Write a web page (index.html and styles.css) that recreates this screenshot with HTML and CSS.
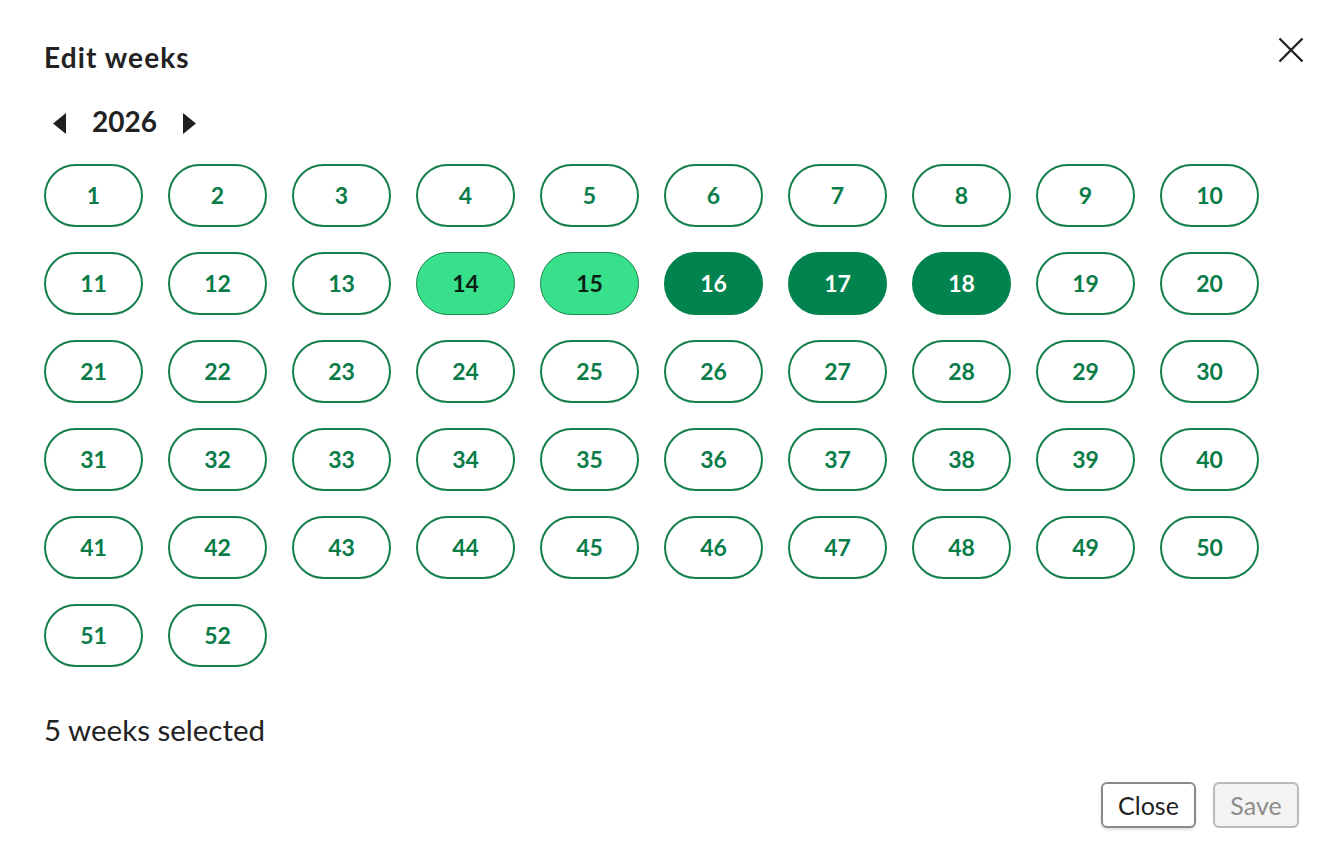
FILE: index.html
```html
<!DOCTYPE html>
<html lang="en">
<head>
<meta charset="utf-8">
<title>Edit weeks</title>
<link rel="stylesheet" href="styles.css">
</head>
<body>
<div class="dialog">
  <header class="header">
    <h1 class="title">Edit weeks</h1>
    <button class="close-x" aria-label="Close">
      <svg width="26" height="26" viewBox="0 0 26 26"><path d="M1.5 1.5 L24.5 24.5 M24.5 1.5 L1.5 24.5" stroke="#1f1f1f" stroke-width="2.3" stroke-linecap="butt" fill="none"/></svg>
    </button>
  </header>
  <div class="year-row">
    <button class="arrow" aria-label="Previous year"><svg width="13" height="21" viewBox="0 0 13 21"><path d="M13 0 L0 10.5 L13 21 Z" fill="#1f1f1f"/></svg></button>
    <span class="year">2026</span>
    <button class="arrow" aria-label="Next year"><svg width="13" height="21" viewBox="0 0 13 21"><path d="M0 0 L13 10.5 L0 21 Z" fill="#1f1f1f"/></svg></button>
  </div>
  <div class="weeks">
    <button class="week">1</button><button class="week">2</button><button class="week">3</button><button class="week">4</button><button class="week">5</button><button class="week">6</button><button class="week">7</button><button class="week">8</button><button class="week">9</button><button class="week">10</button>
    <button class="week">11</button><button class="week">12</button><button class="week">13</button><button class="week light">14</button><button class="week light">15</button><button class="week dark">16</button><button class="week dark">17</button><button class="week dark">18</button><button class="week">19</button><button class="week">20</button>
    <button class="week">21</button><button class="week">22</button><button class="week">23</button><button class="week">24</button><button class="week">25</button><button class="week">26</button><button class="week">27</button><button class="week">28</button><button class="week">29</button><button class="week">30</button>
    <button class="week">31</button><button class="week">32</button><button class="week">33</button><button class="week">34</button><button class="week">35</button><button class="week">36</button><button class="week">37</button><button class="week">38</button><button class="week">39</button><button class="week">40</button>
    <button class="week">41</button><button class="week">42</button><button class="week">43</button><button class="week">44</button><button class="week">45</button><button class="week">46</button><button class="week">47</button><button class="week">48</button><button class="week">49</button><button class="week">50</button>
    <button class="week">51</button><button class="week">52</button>
  </div>
  <p class="summary">5 weeks selected</p>
  <footer class="footer">
    <button class="btn">Close</button>
    <button class="btn disabled" disabled>Save</button>
  </footer>
</div>
</body>
</html>
```
FILE: styles.css
```css
* { box-sizing: border-box; }
html, body { margin: 0; padding: 0; background: #ffffff; }
body {
  font-family: Lato, "Liberation Sans", sans-serif;
  color: #222222;
}
button { font-family: inherit; }
.dialog {
  width: 1344px;
  height: 864px;
  padding: 36px 40px 0 45px;
}
.header {
  display: flex;
  justify-content: space-between;
  align-items: flex-start;
}
.title {
  margin: 5px 0 0 -1px;
  font-size: 28px;
  line-height: 32px;
  font-weight: 700;
  letter-spacing: 1.1px;
  color: #222222;
}
.close-x {
  border: 0;
  background: none;
  padding: 0;
  margin: 1px 0 0 0;
  width: 26px;
  height: 26px;
  display: block;
}
.close-x svg { display: block; }
.year-row {
  display: flex;
  align-items: center;
  gap: 26px;
  height: 32px;
  margin-top: 32px;
  padding-left: 8px;
}
.arrow {
  border: 0;
  background: none;
  padding: 0;
  margin: 5px 0 0 0;
  width: 13px;
  height: 21px;
}
.arrow svg { display: block; }
.year {
  font-size: 28px;
  line-height: 32px;
  font-weight: 700;
  color: #222222;
}
.weeks {
  display: grid;
  grid-template-columns: repeat(10, 99px);
  grid-auto-rows: 63px;
  gap: 25px;
  margin-top: 27px;
  margin-left: -1px;
}
.week {
  border: 2px solid #157e4d;
  border-radius: 32px;
  background: #ffffff;
  color: #0a7c48;
  font-size: 23px;
  font-weight: 700;
  padding: 0 0 2px 0;
  margin: 0;
  height: 63px;
}
.week.light {
  background: #38e08b;
  border: 1.5px solid #1a8650;
  color: #0c1f15;
}
.week.dark {
  background: #00834e;
  border-color: #00834e;
  color: #ffffff;
}
.summary {
  margin: 45px 0 0 -1px;
  font-size: 29.5px;
  line-height: 36px;
  font-weight: 400;
  color: #222222;
}
.footer {
  display: flex;
  justify-content: flex-end;
  gap: 17px;
  margin-top: 34px;
  padding-right: 5px;
}
.btn {
  height: 46px;
  width: 95px;
  border: 2px solid #8a8a8a;
  border-radius: 6px;
  background: #ffffff;
  color: #1f1f1f;
  font-size: 25px;
  padding: 0;
  box-shadow: 0 2px 3px rgba(0, 0, 0, 0.12);
}
.btn.disabled {
  width: 86px;
  background: #f3f3f3;
  border-color: #b8b8b8;
  color: #8d8d8d;
  box-shadow: none;
}
```
